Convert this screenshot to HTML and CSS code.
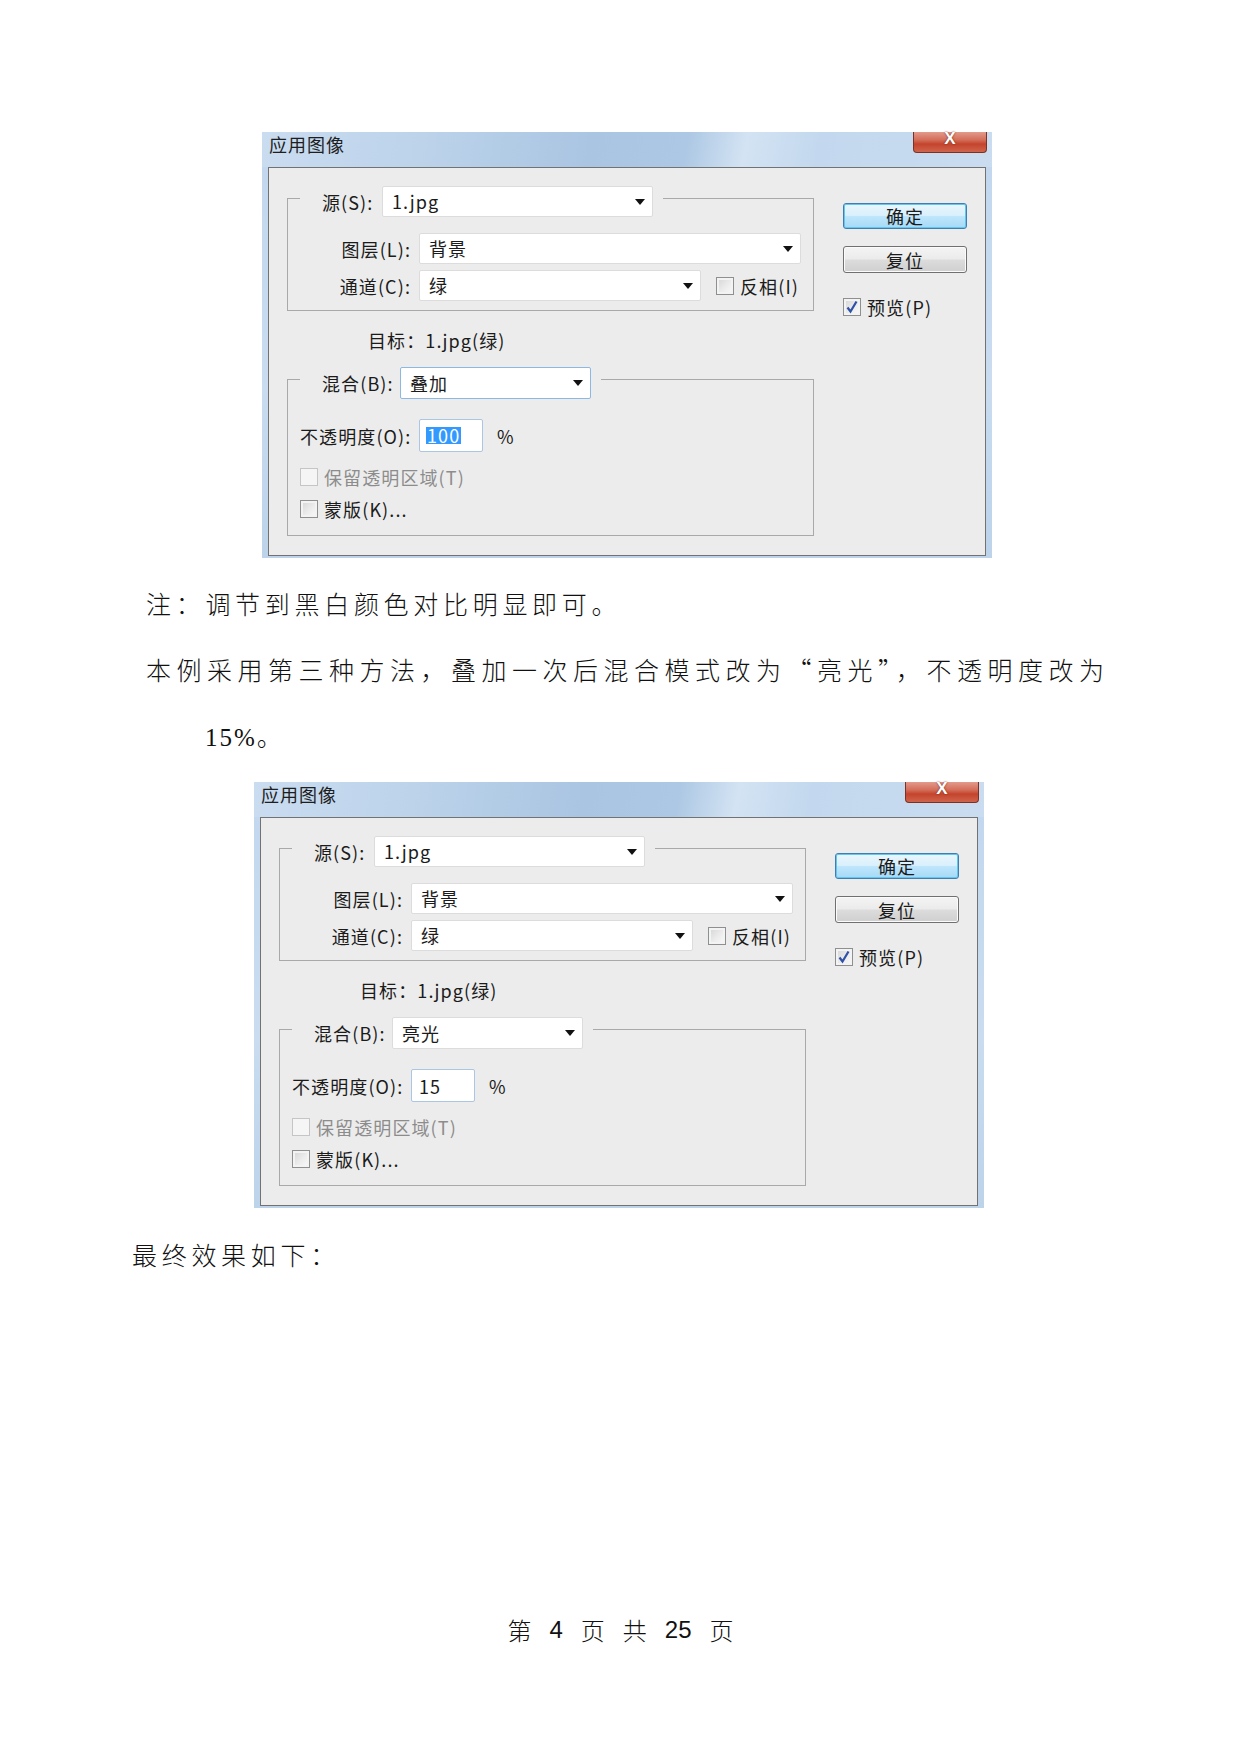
FILE: index.html
```html
<!DOCTYPE html>
<html lang="zh-CN">
<head>
    <meta charset="UTF-8">
    <meta name="viewport" content="width=device-width, initial-scale=1.0">
    <title>应用图像</title>
    <link rel="stylesheet" href="styles.css">
</head>
<body>
<div class="page">

    <!-- 第一次：叠加 100% -->
    <div class="dialog dialog-first">
        <div class="titlebar">
            <span class="title">应用图像</span>
            <span class="close">X</span>
        </div>
        <div class="dialog-body">
            <div class="main-col">
                <fieldset class="group">
                    <legend>
                        <div class="legend-row">
                            <span class="lbl lbl-source">源(S):</span>
                            <span class="select sel-source">1.jpg<i class="arrow"></i></span>
                        </div>
                    </legend>
                    <div class="row row-first">
                        <span class="row-lbl">图层(L):</span>
                        <span class="select sel-layer">背景<i class="arrow"></i></span>
                    </div>
                    <div class="row">
                        <span class="row-lbl">通道(C):</span>
                        <span class="select sel-channel">绿<i class="arrow"></i></span>
                        <span class="check check-invert"></span>
                        <span>反相(I)</span>
                    </div>
                </fieldset>

                <div class="target">目标：1.jpg(绿)</div>

                <fieldset class="group group-blend">
                    <legend>
                        <div class="legend-row">
                            <span class="lbl lbl-blend">混合(B):</span>
                            <span class="select sel-blend focused">叠加<i class="arrow"></i></span>
                        </div>
                    </legend>
                    <div class="opacity-row">
                        <span class="opacity-lbl">不透明度(O):</span>
                        <span class="num-input"><span class="selected">100</span></span>
                        <span class="pct">%</span>
                    </div>
                    <div class="check-row disabled"><span class="check"></span>保留透明区域(T)</div>
                    <div class="check-row"><span class="check"></span>蒙版(K)...</div>
                </fieldset>
            </div>

            <div class="side-col">
                <button class="btn btn-default">确定</button>
                <button class="btn">复位</button>
                <div class="check-row preview">
                    <span class="check">
                        <svg viewBox="0 0 16 16" width="16" height="16"><path d="M3.5 8.5 L6.5 12.5 L12.5 2.5" fill="none" stroke="#2f52a8" stroke-width="2.2"/></svg>
                    </span>预览(P)
                </div>
            </div>
        </div>
    </div>

    <p class="note">注：调节到黑白颜色对比明显即可。</p>
    <p class="para">本例采用第三种方法，叠加一次后混合模式改为“亮光”，不透明度改为<br><span class="latin">15%</span>。</p>

    <!-- 第二次：亮光 15% -->
    <div class="dialog dialog-second">
        <div class="titlebar">
            <span class="title">应用图像</span>
            <span class="close">X</span>
        </div>
        <div class="dialog-body">
            <div class="main-col">
                <fieldset class="group">
                    <legend>
                        <div class="legend-row">
                            <span class="lbl lbl-source">源(S):</span>
                            <span class="select sel-source">1.jpg<i class="arrow"></i></span>
                        </div>
                    </legend>
                    <div class="row row-first">
                        <span class="row-lbl">图层(L):</span>
                        <span class="select sel-layer">背景<i class="arrow"></i></span>
                    </div>
                    <div class="row">
                        <span class="row-lbl">通道(C):</span>
                        <span class="select sel-channel">绿<i class="arrow"></i></span>
                        <span class="check check-invert"></span>
                        <span>反相(I)</span>
                    </div>
                </fieldset>

                <div class="target">目标：1.jpg(绿)</div>

                <fieldset class="group group-blend">
                    <legend>
                        <div class="legend-row">
                            <span class="lbl lbl-blend">混合(B):</span>
                            <span class="select sel-blend">亮光<i class="arrow"></i></span>
                        </div>
                    </legend>
                    <div class="opacity-row">
                        <span class="opacity-lbl">不透明度(O):</span>
                        <span class="num-input"><span class="plain">15</span></span>
                        <span class="pct">%</span>
                    </div>
                    <div class="check-row disabled"><span class="check"></span>保留透明区域(T)</div>
                    <div class="check-row"><span class="check"></span>蒙版(K)...</div>
                </fieldset>
            </div>

            <div class="side-col">
                <button class="btn btn-default">确定</button>
                <button class="btn">复位</button>
                <div class="check-row preview">
                    <span class="check">
                        <svg viewBox="0 0 16 16" width="16" height="16"><path d="M3.5 8.5 L6.5 12.5 L12.5 2.5" fill="none" stroke="#2f52a8" stroke-width="2.2"/></svg>
                    </span>预览(P)
                </div>
            </div>
        </div>
    </div>

    <p class="final">最终效果如下：</p>

    <div class="footer">
        <span>第</span><span class="digit">4</span><span>页</span>
        <span>共</span><span class="digit">25</span><span>页</span>
    </div>

</div>
</body>
</html>
```

FILE: styles.css
```css
* {
    box-sizing: border-box;
}

body {
    margin: 0;
    background: #fff;
    color: #111;
}

.page {
    width: 1241px;
    height: 1754px;
    padding-top: 132px;
    font-family: "Noto Sans CJK SC", sans-serif;
}

/* ---------- 对话框 ---------- */

.dialog {
    width: 730px;
    height: 426px;
    margin-left: 262px;
    display: flex;
    flex-direction: column;
    background: linear-gradient(180deg, #c2d7ee 0%, #c9dcf0 60%, #bcd3ea 100%);
    font-family: "Noto Sans CJK SC", sans-serif;
    font-size: 18px;
    letter-spacing: 1.1px;
    color: #1b1b1b;
}

.dialog-second {
    margin-left: 254px;
    margin-top: 11px;
}

.titlebar {
    height: 35px;
    flex: none;
    display: flex;
    justify-content: space-between;
    align-items: flex-start;
    padding: 0 5px 0 7px;
    background: linear-gradient(100deg, #cadcf0 0%, #bcd3ea 22%, #aac5e2 45%, #adc8e4 58%, #d3e3f3 66%, #c3d8ee 76%, #c9dcf0 100%);
}

.title {
    font-size: 18px;
    line-height: 20px;
    letter-spacing: 1px;
    padding-top: 2px;
    color: #1e1e1e;
}

.close {
    width: 74px;
    height: 21px;
    border: 1px solid #7e3123;
    border-top: none;
    border-radius: 0 0 4px 4px;
    background: linear-gradient(180deg, #e39a8b 0%, #d36d58 40%, #c4442c 60%, #d0644c 100%);
    color: #fff;
    text-align: center;
    font-family: "Liberation Sans", sans-serif;
    font-weight: bold;
    font-size: 17px;
    line-height: 13px;
    letter-spacing: 0;
    text-shadow: 0 0 2px #6b1d10;
}

.dialog-body {
    flex: 1;
    margin: 0 6px 2px;
    background: #ececec;
    border: 1px solid #727272;
    display: flex;
    padding: 11px 0 0 18px;
}

.main-col {
    width: 527px;
}

.side-col {
    width: 124px;
    margin-left: 29px;
    padding-top: 24px;
}

/* ---------- 分组框 ---------- */

.group {
    margin: 0;
    padding: 0 12px 9px;
    border: 1px solid #a9a9a9;
    min-width: 0;
}

.group-blend {
    padding-bottom: 10px;
}

.group legend {
    padding: 7px 10px 0 22px;
}

.legend-row {
    display: flex;
    align-items: center;
}

.lbl-source {
    width: 60px;
}

.lbl-blend {
    width: 78px;
}

.select {
    height: 31px;
    display: flex;
    align-items: center;
    justify-content: space-between;
    padding: 0 7px 0 9px;
    background: #fff;
    border: 1px solid #dcdcdc;
    border-radius: 2px;
    line-height: 29px;
}

.select.focused {
    border-color: #8db8e2;
}

.arrow {
    width: 0;
    height: 0;
    border-left: 5px solid transparent;
    border-right: 5px solid transparent;
    border-top: 6px solid #111;
}

.sel-source {
    width: 271px;
}

.sel-layer {
    flex: 1;
}

.sel-channel {
    width: 282px;
}

.sel-blend {
    width: 191px;
    height: 32px;
}

.row {
    display: flex;
    align-items: center;
    height: 31px;
    margin-top: 6px;
}

.row-first {
    margin-top: 16px;
}

.row-lbl {
    width: 111px;
    margin-right: 8px;
    text-align: right;
}

.check {
    width: 18px;
    height: 18px;
    flex: none;
    display: inline-flex;
    align-items: center;
    justify-content: center;
    border: 1px solid #8e8f8f;
    background: linear-gradient(135deg, #d4d4d4 0%, #ececec 55%, #fafafa 100%);
    box-shadow: inset 0 0 0 2px #f3f3f3;
}

.check-invert {
    margin-left: 15px;
    margin-right: 6px;
}

.target {
    margin: 17px 0 8px 81px;
    line-height: 24px;
}

.opacity-row {
    display: flex;
    align-items: center;
    margin-top: 20px;
    height: 33px;
}

.opacity-lbl {
    width: 119px;
}

.num-input {
    width: 64px;
    height: 33px;
    display: flex;
    align-items: center;
    padding-left: 6px;
    background: #fff;
    border: 1px solid #a9c6e2;
    border-radius: 2px;
}

.num-input .selected {
    background: #3399ff;
    color: #fff;
    line-height: 17px;
    padding: 0 1px;
}

.num-input .plain {
    padding-left: 1px;
}

.pct {
    margin-left: 14px;
}

.check-row {
    display: flex;
    align-items: center;
    height: 32px;
}

.opacity-row + .check-row {
    margin-top: 9px;
}

.check-row .check {
    margin-right: 6px;
}

.check-row.disabled {
    color: #8c8c8c;
}

.check-row.disabled .check {
    border-color: #c5c5c5;
    background: #f5f5f5;
    box-shadow: none;
}

/* ---------- 右侧按钮 ---------- */

.btn {
    display: block;
    width: 124px;
    height: 27px;
    padding: 0;
    margin: 0 0 16px;
    font-family: inherit;
    font-size: 18px;
    line-height: 24px;
    letter-spacing: 1px;
    color: #1b1b1b;
    border: 1px solid #707070;
    border-radius: 3px;
    background: linear-gradient(180deg, #f4f4f4 0%, #ebebeb 48%, #dcdcdc 52%, #cfcfcf 100%);
    box-shadow: inset 0 0 0 1px #fbfbfb;
}

.btn-default {
    height: 26px;
    margin-bottom: 17px;
    border-color: #3c7fb1;
    background: linear-gradient(180deg, #eaf6fd 0%, #d9f0fc 48%, #bee6fd 52%, #a7d9f5 100%);
    box-shadow: inset 0 0 0 1px #63c6f1;
}

.preview {
    height: 20px;
    margin-top: 24px;
}

.preview .check {
    padding: 0;
}

/* ---------- 正文 ---------- */

.note,
.para,
.final {
    margin: 0;
    font-size: 25px;
    line-height: 66px;
    letter-spacing: 4.7px;
    color: #111;
    font-weight: 300;
}

.note {
    margin-top: 12px;
    padding-left: 146px;
}

.para {
    padding-left: 205px;
    text-indent: -59px;
    letter-spacing: 5.5px;
}

.latin {
    font-family: "Liberation Serif", serif;
    letter-spacing: 2px;
}

.final {
    margin-top: 13px;
    padding-left: 132px;
}

.footer {
    margin-top: 323px;
    display: flex;
    justify-content: center;
    gap: 18px;
    font-size: 24px;
    line-height: 40px;
    font-weight: 300;
}

.footer .digit {
    font-family: "Liberation Sans", sans-serif;
    font-weight: normal;
}
```
